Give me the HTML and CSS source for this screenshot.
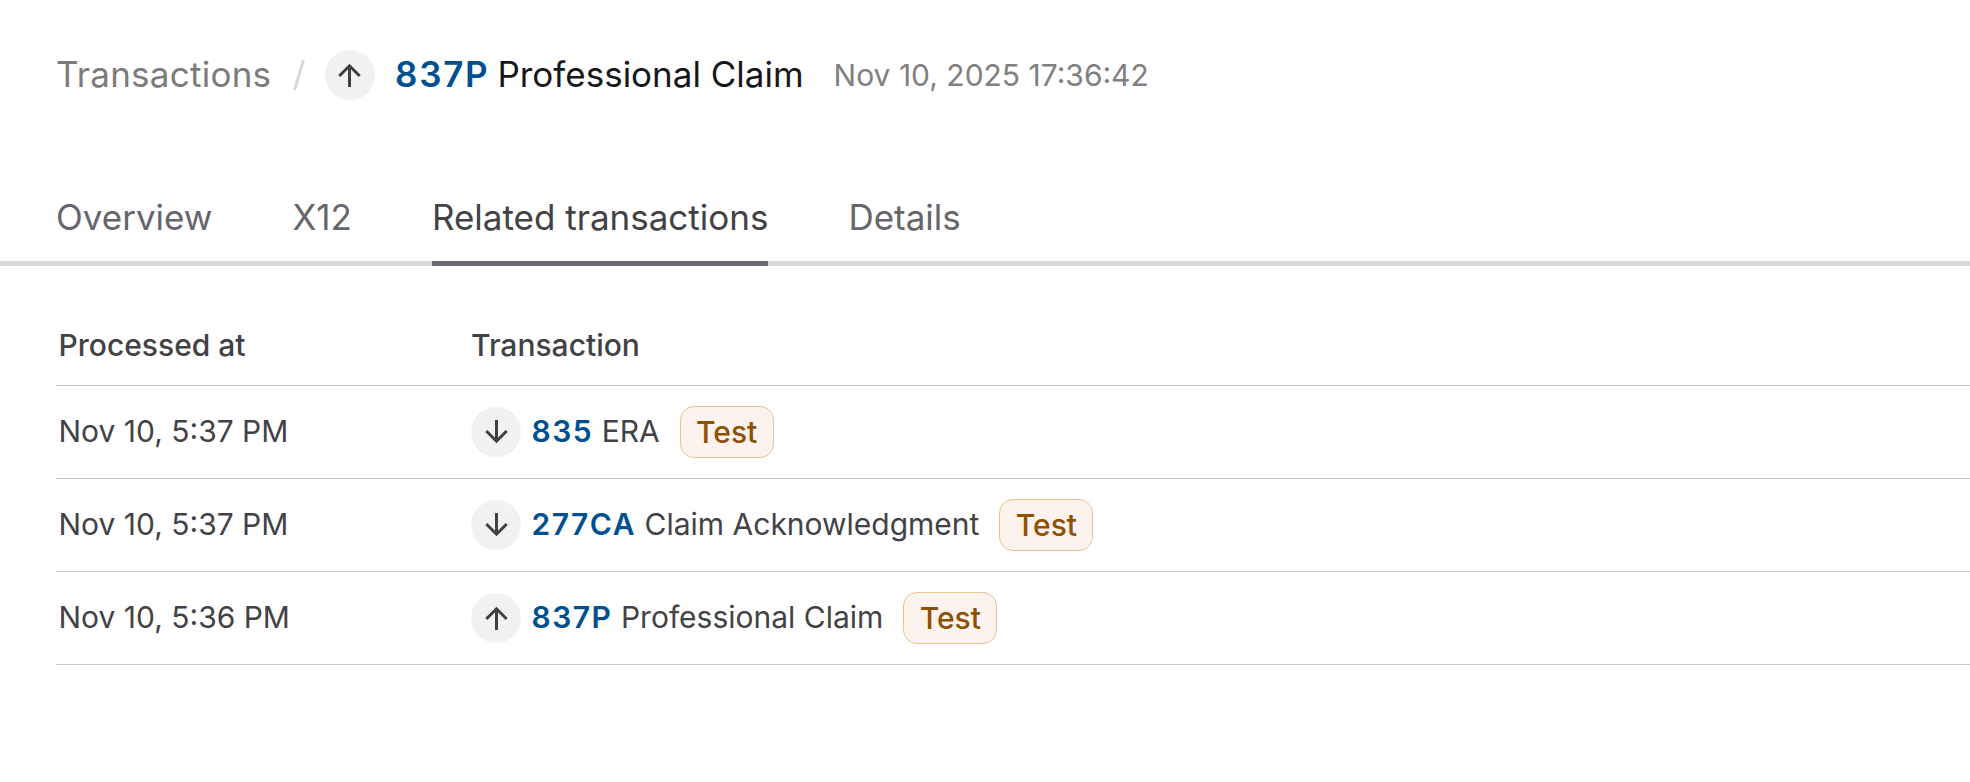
FILE: index.html
```html
<!DOCTYPE html>
<html lang="en">
<head>
<meta charset="utf-8">
<title>837P Professional Claim</title>
<link rel="stylesheet" href="styles.css">
</head>
<body>
<header class="header">
  <a class="crumb">Transactions</a><svg class="slash" viewBox="0 0 12 32"><path d="M10.500 1L1.500 31"/></svg>
  <span class="dir"><svg viewBox="0 0 50 50"><path d="M24.500 37V16M14.300 26L24.500 15.800l10.200 10.200"/></svg></span>
  <h1 class="title"><b>837P</b><span>Professional Claim</span></h1>
  <time class="stamp">Nov 10, 2025 17:36:42</time>
</header>
<nav class="tabs">
  <a class="tab">Overview</a><a class="tab">X12</a><a class="tab active">Related transactions</a><a class="tab">Details</a>
</nav>
<main class="table">
  <div class="row head"><div class="when">Processed at</div><div class="what">Transaction</div></div>
  <div class="row"><div class="when">Nov 10, 5:37 PM</div><div class="what"><span class="dir"><svg viewBox="0 0 50 50"><path d="M25.500 13v21M15.300 24L25.500 34.200l10.200-10.200"/></svg></span><b>835</b><span class="name">ERA</span><span class="badge">Test</span></div></div>
  <div class="row"><div class="when">Nov 10, 5:37 PM</div><div class="what"><span class="dir"><svg viewBox="0 0 50 50"><path d="M25.500 13v21M15.300 24L25.500 34.200l10.200-10.200"/></svg></span><b>277CA</b><span class="name">Claim Acknowledgment</span><span class="badge">Test</span></div></div>
  <div class="row"><div class="when">Nov 10, 5:36 PM</div><div class="what"><span class="dir"><svg viewBox="0 0 50 50"><path d="M25.500 37V16M15.300 26L25.500 15.800l10.200 10.200"/></svg></span><b>837P</b><span class="name">Professional Claim</span><span class="badge">Test</span></div></div>
</main>
</body>
</html>
```
FILE: styles.css
```css
* { box-sizing: border-box; }
body { margin: 0; background: #fff; font-family: Inter, sans-serif; color: #424246; overflow: hidden; }
.header { display: flex; align-items: center; height: 150px; padding-left: 56px; font-size: 35px; white-space: nowrap; }
.crumb { color: #7b7b7b; width: 216px; font-weight: 400; letter-spacing: .25px; padding-bottom: 2px; }
.slash { width: 12px; height: 32px; margin: 0 20px 0 21px; fill: none; stroke: #d8d8d8; stroke-width: 3; }
.dir { width: 50px; height: 50px; border-radius: 50%; background: #f1f1f1; flex: none; }
.dir svg { display: block; width: 50px; height: 50px; fill: none; stroke: #404044; stroke-width: 3; }
.title { display: flex; gap: 8px; margin: 0 0 0 20px; padding-bottom: 2px; font-size: 35px; font-weight: 400; color: #171719; }
b { color: #00508f; font-weight: 600; letter-spacing: .05em; }
.stamp { font-size: 30px; color: #808080; margin-left: 30px; }
.tabs { display: flex; height: 116px; padding-left: 56px; gap: 80px; border-bottom: 5px solid #d8d9da; font-size: 35px; color: #65656a; white-space: nowrap; }
.tab { height: 116px; padding-top: 45px; line-height: 44px; border-bottom: 5px solid transparent; }
.active { color: #424246; border-bottom-color: #6b6970; }
.table { margin: 26px 0 0 56px; font-size: 30px; white-space: nowrap; }
.row { display: flex; align-items: center; height: 93px; border-bottom: 1px solid #c9c9c9; }
.when { width: 415px; padding-left: 2.500px; }
.what { display: flex; align-items: center; }
.row .when, .row b, .name { padding-bottom: 2px; }
.head { height: 94px; font-weight: 500; padding-top: 12px; }
.row.head .when { padding-bottom: 0; }
.row b { margin-left: 10.500px; }
.name { margin-left: 8.500px; }
.badge { margin-left: 20px; width: 94px; height: 52px; border: 1px solid #e9c28f; border-radius: 14px; background: #fcf2ee; color: #8f5000; font-weight: 500; line-height: 50px; text-align: center; }
```
